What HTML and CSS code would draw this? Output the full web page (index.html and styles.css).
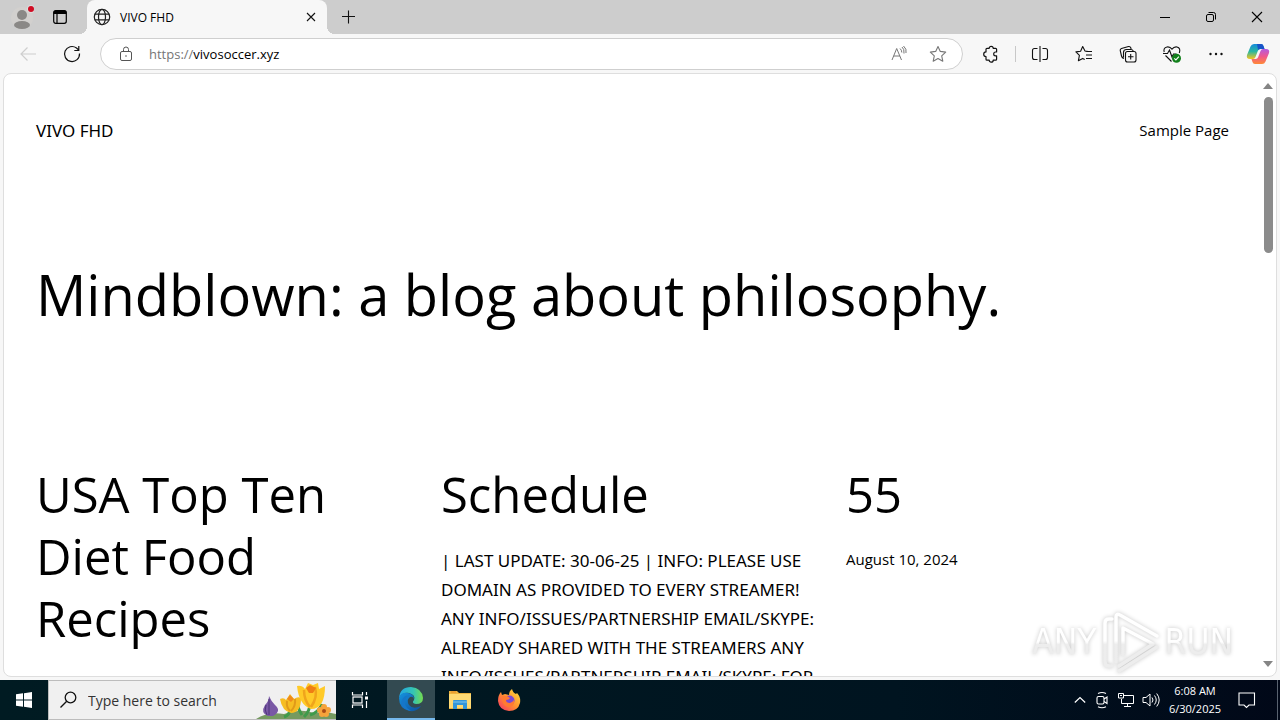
FILE: index.html
```html
<!DOCTYPE html>
<html lang="en">
<head>
<meta charset="utf-8">
<meta name="viewport" content="width=device-width, initial-scale=1">
<title>VIVO FHD</title>
<link rel="stylesheet" href="styles.css">
</head>
<body>
<div class="tabbar">
  <div class="tabbar-tools">
    <button class="icon-btn" aria-label="Profile"><svg width="24" height="24" viewBox="0 0 24 24"><circle cx="12" cy="13" r="11" fill="#d2d0ce"/><circle cx="12" cy="10" r="5" fill="#8a8886"/><ellipse cx="12" cy="20" rx="8" ry="4" fill="#8a8886"/><circle cx="21" cy="4" r="4" fill="#dcdcdc"/><circle cx="21" cy="4" r="3" fill="#d00d24"/></svg></button>
    <button class="icon-btn" aria-label="Tab actions"><svg width="16" height="16" viewBox="0 0 16 16"><rect x="1.700" y="1.700" width="12.600" height="12.600" rx="2" fill="none" stroke="#000" stroke-width="1.200"/><path d="M1.500 5V3.500q0-2 2-2h9q2 0 2 2V5z"/><path d="M5 5v9" stroke="#000" stroke-width="1.200"/></svg></button>
  </div>
  <div class="tab">
    <svg width="18" height="18" viewBox="0 0 18 18" fill="none" stroke="#222" stroke-width="1.200"><circle cx="9" cy="9" r="7.700"/><ellipse cx="9" cy="9" rx="3.500" ry="7.700"/><path d="M1.800 6.200h14.400M1.800 11.800h14.400"/></svg>
    <span class="tab-title">VIVO FHD</span>
    <button class="icon-btn" aria-label="Close tab"><svg width="12" height="12" viewBox="0 0 12 12"><path d="M2 2l8 8M10 2l-8 8" stroke="#111" stroke-width="1.100"/></svg></button>
  </div>
  <button class="icon-btn new-tab" aria-label="New tab"><svg width="16" height="16" viewBox="0 0 16 16"><path d="M8.500 1.500v13M2 7.500h13" stroke="#111" stroke-width="1.100"/></svg></button>
  <div class="window-controls">
    <button class="icon-btn" aria-label="Minimize"><svg width="12" height="12" viewBox="0 0 12 12"><path d="M1 6.500h10" stroke="#000"/></svg></button>
    <button class="icon-btn" aria-label="Restore"><svg width="12" height="12" viewBox="0 0 12 12" fill="none" stroke="#000"><rect x="1.500" y="3.500" width="7" height="7" rx="1.500"/><path d="M3.500 1.500H8.500q2 0 2 2V8.500"/></svg></button>
    <button class="icon-btn" aria-label="Close"><svg width="12" height="12" viewBox="0 0 12 12"><path d="M1 1l10 10M11 1L1 11" stroke="#000" stroke-width="1.100"/></svg></button>
  </div>
</div>
<div class="toolbar">
  <div class="nav-buttons">
    <button class="icon-btn" aria-label="Back" disabled><svg width="18" height="18" viewBox="0 0 18 18" fill="none" stroke="#cecece" stroke-width="1.200"><path d="M17 9H2M8.500 2.500L2 9l6.500 6.500"/></svg></button>
    <button class="icon-btn" aria-label="Refresh"><svg width="18" height="18" viewBox="0 0 18 18" fill="none" stroke="#111" stroke-width="1.200"><path d="M16.500 8.500A7.500 7.500 0 1 1 13.500 3L15.700 5M15.800 1v4.500h-4.500"/></svg></button>
  </div>
  <div class="address">
    <svg width="14" height="16" viewBox="0 0 14 16" fill="none" stroke="#555"><rect x="1.500" y="5.500" width="11" height="9" rx="1.500"/><path d="M4.500 5.500V3.500a2.500 2.500 0 0 1 5 0v2"/><circle cx="7" cy="10" r=".8" fill="#555" stroke="none"/></svg>
    <span class="url"><span class="scheme">https://</span>vivosoccer.xyz</span>
    <button class="icon-btn" aria-label="Read aloud"><svg width="18" height="18" viewBox="0 0 18 18" fill="none" stroke="#777"><path d="M2 15L6.700 3.500L11.500 15M3.700 11h6.200M10 3.500q1.800 1.500 1.800 4M12 2q2.500 2 2 6.500M13.500 1q3.500 3 2.500 7"/></svg></button>
    <button class="icon-btn star" aria-label="Add to favorites"><svg width="18" height="18" viewBox="0 0 18 18" fill="none" stroke="#777" stroke-width="1.100" stroke-linejoin="round"><path d="M9 1.500l2.300 4.900 5.400.7-4 3.700 1.100 5.400L9 13.500l-4.800 2.700 1.100-5.400-4-3.700 5.400-.7z"/></svg></button>
  </div>
  <div class="actions">
    <button class="icon-btn" aria-label="Extensions"><svg width="18" height="18" viewBox="0 0 18 18" fill="none" stroke="#111" stroke-width="1.200" stroke-linejoin="round"><path d="M4 4.300q0-1 1-1h2.200a2 2 0 0 1 4 0h2.400q1 0 1 1V7h-1a1.900 1.900 0 0 0 0 3.800h1v3.400q0 1-1 1h-2.400a2 2 0 0 1-4 0H5q-1 0-1-1V11.500a2.300 2.300 0 0 1 0-4.600z"/></svg></button>
    <span class="divider"></span>
    <button class="icon-btn" aria-label="Split screen"><svg width="18" height="18" viewBox="0 0 18 18" fill="none" stroke="#111" stroke-width="1.100"><path d="M6.500 3.500H3.500q-2 0-2 2v7q0 2 2 2h3M11.500 3.500h3q2 0 2 2v7q0 2-2 2h-3M9 1v16"/></svg></button>
    <button class="icon-btn" aria-label="Favorites"><svg width="18" height="18" viewBox="0 0 18 18" fill="none" stroke="#111" stroke-width="1.100" stroke-linejoin="round"><path d="M12.500 6.200L10 6 7.700 1.500 5.600 6.200l-4.700.7 3.500 3.500-1 5.300 4.300-2.300 2 1M10.500 6.500h6.500M11 10h6M11 13.500h6"/></svg></button>
    <button class="icon-btn" aria-label="Collections"><svg width="18" height="18" viewBox="0 0 18 18" fill="none" stroke="#111" stroke-width="1.100"><path d="M5 13.500Q3 13 2.500 11L1.200 5.500Q1 4 2.500 3.500L9.500 1.500q1.700-.3 2.300 1.300l.3 1.300"/><path d="M4.500 12.500V7.500q0-3 3-3H12q1.500 0 2.300 1.500"/><rect x="6.500" y="6.500" width="10.500" height="10.500" rx="2"/><path d="M11.700 9v5.500M9 11.700h5.500"/></svg></button>
    <button class="icon-btn" aria-label="Browser essentials"><svg width="18" height="18" viewBox="0 0 18 18" fill="none" stroke="#111" stroke-width="1.100"><path d="M1.200 7Q0 3 4 2q3-.5 5 2.200Q11 1.500 14 2q4 1 2.300 6M0 8.500h4.500l2-3.500 2.500 7 1.500-3h3M2.500 10.500l6 6"/><circle cx="13.500" cy="13.200" r="4.500" fill="#12801b" stroke="none"/><path d="M11.300 13.400l1.600 1.500 3-3.200" stroke="#fff"/></svg></button>
    <button class="icon-btn" aria-label="Settings and more"><svg width="18" height="18" viewBox="0 0 18 18" fill="#111"><circle cx="3.500" cy="9" r="1.200"/><circle cx="9" cy="9" r="1.200"/><circle cx="14.500" cy="9" r="1.200"/></svg></button>
    <button class="icon-btn copilot" aria-label="Copilot"><svg width="24" height="22" viewBox="0 0 24 22"><defs><linearGradient id="cp1" x1="0" y1="0" x2="0" y2="1"><stop offset="0" stop-color="#168bdc"/><stop offset=".5" stop-color="#2ab7a0"/><stop offset="1" stop-color="#f5c51f"/></linearGradient><linearGradient id="cp2" x1="0" y1="0" x2="0" y2="1"><stop offset="0" stop-color="#b35ae0"/><stop offset=".5" stop-color="#f0578d"/><stop offset="1" stop-color="#ff8a35"/></linearGradient></defs><path d="M8 1h7q2 0 2.500 2l1 3h-4q-2 0-2.700 2L9.500 14q-.8 2-2.500 2H4q-4 0-3-4L4.500 3.500Q5.500 1 8 1z" fill="url(#cp1)"/><path d="M11 1h4q2 0 2.500 2l1 3h-4q-1.500 0-2.500 1z" fill="#1853c8"/><path d="M16 21H9q-2 0-2.500-2l-1-3h4q2 0 2.700-2l2.300-6q.8-2 2.500-2h3q4 0 3 4l-3.500 8.500Q18.500 21 16 21z" fill="url(#cp2)"/></svg></button>
  </div>
</div>
<div class="viewport">
  <main class="page">
    <header class="site-header">
      <a class="site-name" href="#">VIVO FHD</a>
      <nav><a class="nav-link" href="#">Sample Page</a></nav>
    </header>
    <h1 class="headline">Mindblown: a blog about philosophy.</h1>
    <div class="posts">
      <article><h2 class="post-title"><a href="#">USA Top Ten Diet Food Recipes</a></h2></article>
      <article>
        <h2 class="post-title"><a href="#">Schedule</a></h2>
        <p class="excerpt">| LAST UPDATE: 30-06-25 | INFO: PLEASE USE DOMAIN AS PROVIDED TO EVERY STREAMER! ANY INFO/ISSUES/PARTNERSHIP EMAIL/SKYPE: ALREADY SHARED WITH THE STREAMERS ANY INFO/ISSUES/PARTNERSHIP EMAIL/SKYPE: FOR</p>
      </article>
      <article>
        <h2 class="post-title"><a href="#">55</a></h2>
        <time class="date" datetime="2024-08-10">August 10, 2024</time>
      </article>
    </div>
  </main>
  <div class="scrollbar">
    <svg width="10" height="6" viewBox="0 0 10 6"><path d="M5 0l5 6H0z" fill="#858585"/></svg>
    <div class="track"><div class="thumb"></div></div>
    <svg width="10" height="6" viewBox="0 0 10 6"><path d="M5 6l5-6H0z" fill="#858585"/></svg>
  </div>
  <div class="watermark">
    <span class="mark-text">ANY</span>
    <svg width="60" height="64" viewBox="0 0 60 64" fill="none" stroke-width="3.500" stroke-linejoin="round" stroke-linecap="round"><defs><linearGradient id="wm" gradientUnits="userSpaceOnUse" x1="0" y1="0" x2="0" y2="64"><stop offset=".48" stop-color="#fff"/><stop offset=".54" stop-color="#ededed"/></linearGradient></defs><g stroke="url(#wm)"><path d="M11 9H8Q4 9 4 13V52q0 4 4 4h3M15 52V7q0-4 4-2L56 26M22 45V18L52 34 18 56M18 61L56 37"/></g></svg>
    <span class="mark-text">RUN</span>
  </div>
</div>
<div class="taskbar">
  <button class="task start" aria-label="Start"><svg width="16" height="16" viewBox="0 0 16 16" fill="#fff"><path d="M0 2.300l7-1v6.200H0zM8 1.200L16 0v7.500H8zM0 8.500h7v6.200l-7-1zM8 8.500h8V16l-8-1.200z"/></svg></button>
  <label class="search">
    <svg width="18" height="18" viewBox="0 0 18 18" fill="none" stroke="#111" stroke-width="1.300"><circle cx="10.500" cy="6.500" r="5.300"/><path d="M6.700 10.300L.5 16.500"/></svg>
    <input class="search-input" type="text" placeholder="Type here to search" aria-label="Type here to search">
    <svg class="flowers" width="80" height="38" viewBox="0 0 80 38"><path d="M0 38Q12 30 28 33 44 27 58 32 70 30 80 33v5z" fill="#759a60"/><path d="M28 36Q34 34 34 28M48 36Q54 30 54 22M46 34Q42 28 42 24M54 34Q62 32 66 23" stroke="#3f9a4b" stroke-width="3" fill="none"/><path d="M13 15q0 5-4 9-5 8 3 11h5q9-5 2-11-4-4-6-9z" fill="#7958a5"/><path d="M13 18v16M10 24q-2 5 1 10" stroke="#4e357b" fill="none"/><path d="M24 18q4-2 6 1l4-6 4 5q4-3 7-1 0 15-10 15-9-2-11-14z" fill="#f6bd22"/><path d="M31 20q-1 6 3 10M39 18q1 7-4 12" stroke="#e09a1a" stroke-width="2" fill="none"/><path d="M31 18l3-4 4 4-3 3z" fill="#ef8a1c"/><path d="M41 5q5-1 8 3l3-6 5 2 5-2 1 6 6-3q0 23-14 23-12-4-14-23z" fill="#ffca28"/><path d="M48 9q0 10 6 17M59 6q3 10-4 20" stroke="#f0a51c" stroke-width="2.500" fill="none"/><path d="M50 7l4-3 6 3-3 5h-4z" fill="#ef7e14"/><g fill="#f6a33b"><circle cx="68" cy="26" r="3"/><circle cx="72" cy="29" r="3"/><circle cx="70" cy="33" r="3"/><circle cx="66" cy="33" r="3"/><circle cx="64" cy="29" r="3"/></g><circle cx="68" cy="30" r="2" fill="#a84b16"/></svg>
  </label>
  <button class="task task-view" aria-label="Task view"><svg width="18" height="18" viewBox="0 0 18 18" fill="none" stroke="#fff" stroke-width="1.200"><path d="M1.500 1v3h10V1M1.500 17v-3h10V17M15.500 1v3M15.500 10v7"/><rect x="2" y="6" width="9" height="6"/><path d="M14 7h3" stroke-width="3"/></svg></button>
  <button class="task active" aria-label="Microsoft Edge"><svg width="26" height="26" viewBox="0 0 26 26"><defs><linearGradient id="e1"><stop offset="0" stop-color="#22a5e6"/><stop offset=".6" stop-color="#35c5b4"/><stop offset="1" stop-color="#75dc4e"/></linearGradient><linearGradient id="e2" x1="0" y1="0" x2="1" y2="1"><stop offset="0" stop-color="#1593df"/><stop offset="1" stop-color="#0d4f9e"/></linearGradient></defs><path d="M1 12Q2 1 13 1q11 1 12 11 0 6-7 6-5-1-2-4 2-5-5-7-7-1-10 5z" fill="url(#e1)"/><path d="M1 12Q3 6 10 7q6 1 6 6-1-3-4-2-4 3-1 8 4 5 12 1-4 6-11 5Q1 23 1 12z" fill="url(#e2)"/><path d="M8 12q-4 8 5 13Q1 23 4 14q3-6 8-4-3 0-4 2z" fill="#1676c8"/></svg></button>
  <button class="task" aria-label="File Explorer"><svg width="24" height="22" viewBox="0 0 24 22"><path d="M1 2h8l2 2h12v16H1z" fill="#edb33e"/><path d="M1 5h22v14H1z" fill="#ffda73"/><path d="M3 3h5" stroke="#e98b24"/><path d="M5 20v-8q0-1 1-1h12q1 0 1 1v8h-4v-4H9v4z" fill="#3496d9"/><path d="M5 13h14" stroke="#80c6ee"/></svg></button>
  <button class="task" aria-label="Firefox"><svg width="24" height="24" viewBox="0 0 24 24"><defs><linearGradient id="ff" x1="1" y1="0" x2="0" y2="1"><stop offset="0" stop-color="#ffe23e"/><stop offset=".5" stop-color="#ff9130"/><stop offset="1" stop-color="#f52d68"/></linearGradient></defs><path d="M4 4l1 3 3-1 4 1q0-4 3-6 1 4 4 5l1-1q4 4 3 10-2 8-11 8Q2 22 1 13 1 7 4 4z" fill="url(#ff)"/><circle cx="12.500" cy="12.500" r="5" fill="#7949d4"/><path d="M5 8l5 0 3 2q-1 2-4 2 0 3 4 3 3-1 4-3 1 7-6 7-7-2-6-11z" fill="#ff7a31"/></svg></button>
  <div class="tray">
    <button class="icon-btn" aria-label="Show hidden icons"><svg width="12" height="12" viewBox="0 0 12 12"><path d="M.8 8.500L6 3.500l5.200 5" fill="none" stroke="#fff" stroke-width="1.200"/></svg></button>
    <button class="icon-btn" aria-label="Camera"><svg width="16" height="18" viewBox="0 0 16 18" fill="none" stroke="#fff" stroke-width="1.100"><rect x="3" y="5.500" width="7" height="7.500" rx="1.500"/><path d="M10 8l3-2v6.500l-3-2M4 2.500q4-2 8 0M4 15.700q4 2 8 0"/></svg></button>
    <button class="icon-btn" aria-label="Network"><svg width="16" height="16" viewBox="0 0 16 16" fill="none" stroke="#fff"><path d="M6 3.500h9.500v8H3.500V7M9.500 11.500v3M6 14.500h7M.5 1.500h5V6h-5zM2 3.500h2"/></svg></button>
    <button class="icon-btn" aria-label="Volume"><svg width="18" height="16" viewBox="0 0 18 16" fill="none" stroke="#fff"><path d="M1 5.500h3l4-3.500v12l-4-3.500H1zM10 5.500q2 2.500 0 5M12.500 3.500q3.500 4.500 0 9M14.700 1.500q5 6.500 0 13"/></svg></button>
    <div class="clock"><span>6:08 AM</span><span>6/30/2025</span></div>
    <button class="icon-btn notify" aria-label="Notifications"><svg width="18" height="18" viewBox="0 0 18 18" fill="none" stroke="#fff" stroke-width="1.100"><path d="M1 2h15.500v12H11l-2.500 2.500L6 14H1z"/></svg></button>
    <span class="desktop-edge"></span>
  </div>
</div>
</body>
</html>
```
FILE: styles.css
```css
* { box-sizing: border-box; }
body {
  margin: 0;
  height: 100vh;
  display: flex;
  flex-direction: column;
  overflow: hidden;
  background: #f7f7f7;
  color: #000;
  font-family: "Open Sans", "Noto Sans", sans-serif;
}
button { border: 0; padding: 0; background: none; font: inherit; }
svg { display: block; flex: none; }
a { color: inherit; text-decoration: none; }
.icon-btn { display: flex; align-items: center; justify-content: center; flex: none; }

.tabbar { flex: none; height: 34px; display: flex; align-items: center; background: #cdcdcd; }
.tabbar-tools { height: 34px; width: 87px; display: flex; align-items: center; gap: 18px; padding-left: 10px; }
.tab {
  position: relative;
  width: 240px;
  height: 34px;
  display: flex;
  align-items: center;
  gap: 9px;
  padding: 0 10px 0 6px;
  background: #f7f7f7;
  border-radius: 8px 8px 0 0;
  font-size: 12px;
}
.tab::before, .tab::after {
  content: "";
  position: absolute;
  bottom: 0;
  width: 8px;
  height: 8px;
}
.tab::before { right: 100%; background: radial-gradient(circle at 0 0, transparent 8px, #f7f7f7 8px); }
.tab::after { left: 100%; background: radial-gradient(circle at 100% 0, transparent 8px, #f7f7f7 8px); }
.tab-title { flex: 1; }
.new-tab { margin-left: 13px; }
.window-controls { margin-left: auto; display: flex; gap: 34px; padding-right: 17px; }

.toolbar { flex: none; height: 39px; display: flex; align-items: center; }
.nav-buttons { width: 100px; display: flex; gap: 26px; padding-left: 19px; }
.address {
  flex: 1;
  height: 32px;
  display: flex;
  align-items: center;
  padding: 0 15px 0 18px;
  background: #fff;
  border: 1px solid #cfcfcf;
  border-radius: 16px;
  font-size: 13px;
}
.url { flex: 1; margin-left: 16px; }
.scheme { color: #767676; }
.star { margin-left: 21px; }
.actions { width: 317px; display: flex; align-items: center; gap: 26px; padding-left: 19px; }
.divider { width: 1px; height: 16px; margin: 0 -11px; background: #c8c8c8; }
.copilot { margin-left: -5px; }

.viewport {
  position: relative;
  flex: 1;
  min-height: 0;
  display: flex;
  margin: 0 3px 3px;
  overflow: hidden;
  background: #fff;
  border: 1px solid #dedede;
  border-radius: 8px;
}
.page { flex: 1; min-width: 0; padding: 0 31px 0 32px; overflow: hidden; }
.site-header { display: flex; align-items: center; justify-content: space-between; padding-top: 42px; line-height: 29px; }
.site-name { font-family: "Noto Sans", sans-serif; font-size: 17px; }
.nav-link { font-size: 15px; }
.headline { margin: 114px 0 0; font-size: 56px; line-height: 70px; font-weight: 400; }
.posts { display: grid; grid-template-columns: repeat(3, 1fr); gap: 22px; margin-top: 134px; }
.post-title { margin: 0; font-size: 49px; line-height: 62px; font-weight: 400; }
.excerpt { margin: 21px 0 0; font-family: "Noto Sans", sans-serif; font-size: 17px; line-height: 29px; }
.date { display: block; margin-top: 21px; font-size: 15px; line-height: 26px; }
.scrollbar { width: 16px; display: flex; flex-direction: column; align-items: center; gap: 8px; padding: 9px 0; }
.track { flex: 1; }
.thumb { width: 9px; height: 28%; border-radius: 5px; background: #8b8b8b; }
.watermark {
  position: absolute;
  right: 43px;
  bottom: 2px;
  display: flex;
  align-items: center;
  gap: 4px;
  font: 400 35px/64px "DejaVu Sans Condensed", sans-serif;
  filter: drop-shadow(0 0 2px #c4c4c4);
}
.mark-text { background: linear-gradient(#fff 50%, #ededed 54%); background-clip: text; color: transparent; }

.taskbar { flex: none; height: 40px; display: flex; background: linear-gradient(90deg, #001b22, #001420 70%, #010818); }
.task { width: 49px; height: 40px; display: flex; align-items: center; justify-content: center; }
.start { width: 48px; }
.task-view { width: 51px; padding-right: 3px; }
.active { width: 48px; background: #334a51; border-bottom: 2px solid #76b9ed; }
.search { width: 288px; height: 40px; display: flex; align-items: center; background: #f0f0f0; border: 1px solid #bcbcbc; border-right: 0; padding-left: 11px; }
.search-input { flex: 1; min-width: 0; margin-left: 10px; border: 0; padding: 0; background: none; outline: 0; font: 14px "Open Sans", "Noto Sans", sans-serif; }
.search-input::placeholder { color: #333; opacity: 1; }
.tray { margin-left: auto; display: flex; align-items: center; gap: 8px; color: #fff; }
.clock { width: 54px; display: flex; flex-direction: column; align-items: center; font-size: 11px; line-height: 18px; }
.notify { margin: 0 13px 0 8px; }
.desktop-edge { width: 3px; height: 40px; border-left: 1px solid #596270; }
```
